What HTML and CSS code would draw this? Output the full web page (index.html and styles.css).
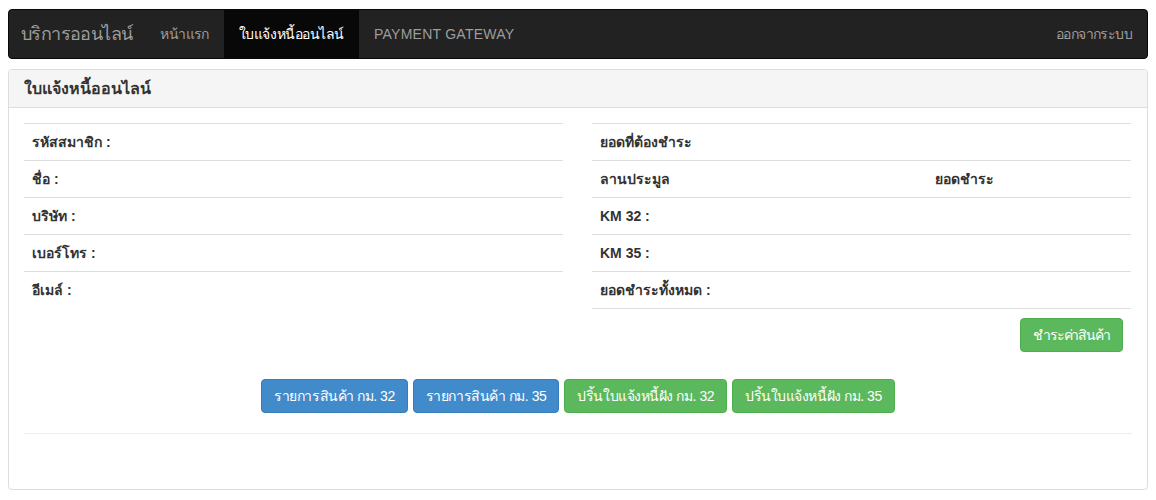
FILE: index.html
```html
<!DOCTYPE html>
<html lang="th">
<head>
<meta charset="utf-8">
<title>ใบแจ้งหนี้ออนไลน์</title>
<link rel="stylesheet" href="styles.css">
</head>
<body>
<nav class="navbar">
  <a class="brand" href="#">บริการออนไลน์</a>
  <ul class="nav">
    <li><a href="#">หน้าแรก</a></li>
    <li class="active"><a href="#">ใบแจ้งหนี้ออนไลน์</a></li>
    <li><a class="latin" href="#">PAYMENT GATEWAY</a></li>
  </ul>
  <ul class="nav nav-right">
    <li><a href="#">ออกจากระบบ</a></li>
  </ul>
</nav>

<div class="panel">
  <div class="panel-heading"><h3 class="panel-title">ใบแจ้งหนี้ออนไลน์</h3></div>
  <div class="panel-body">
    <div class="cols">
      <table class="table">
        <tr><th>รหัสสมาชิก :</th></tr>
        <tr><th>ชื่อ :</th></tr>
        <tr><th>บริษัท :</th></tr>
        <tr><th>เบอร์โทร :</th></tr>
        <tr><th>อีเมล์ :</th></tr>
      </table>
      <table class="table table-right">
        <colgroup><col class="c1"><col class="c2"></colgroup>
        <tr><th colspan="2">ยอดที่ต้องชำระ</th></tr>
        <tr><th>ลานประมูล</th><th>ยอดชำระ</th></tr>
        <tr><th colspan="2">KM 32 :</th></tr>
        <tr><th colspan="2">KM 35 :</th></tr>
        <tr><th colspan="2">ยอดชำระทั้งหมด :</th></tr>
        <tr><td colspan="2" class="right"><button class="btn btn-success btn-pay">ชำระค่าสินค้า</button></td></tr>
      </table>
    </div>
    <div class="actions">
      <button class="btn btn-primary">รายการสินค้า กม. 32</button>
      <button class="btn btn-primary">รายการสินค้า กม. 35</button>
      <button class="btn btn-success">ปริ้นใบแจ้งหนี้ฝัง กม. 32</button>
      <button class="btn btn-success">ปริ้นใบแจ้งหนี้ฝัง กม. 35</button>
    </div>
    <hr class="divider">
  </div>
</div>
</body>
</html>
```

FILE: styles.css
```css
* { box-sizing: border-box; }
body {
  margin: 9px 8px 8px 8px;
  font-family: "Liberation Sans", Arial, sans-serif;
  font-size: 14px;
  line-height: 20px;
  color: #333;
  background: #fff;
}
a { text-decoration: none; }

.navbar {
  display: flex;
  align-items: stretch;
  height: 50px;
  background: #222;
  border: 1px solid #080808;
  border-radius: 4px;
  margin-bottom: 10px;
}
.brand {
  display: block;
  padding: 14px 13px 15px 12px;
  font-size: 18px;
  line-height: 20px;
  letter-spacing: -0.6px;
  color: #9d9d9d;
}
.nav {
  list-style: none;
  margin: 0;
  padding: 0;
  display: flex;
}
.nav li a {
  display: block;
  padding: 14px 15px 15px 15px;
  line-height: 20px;
  letter-spacing: -0.6px;
  color: #9d9d9d;
}
.nav li a.latin { letter-spacing: 0.25px; }
.nav li.active a {
  background: #080808;
  color: #fff;
  letter-spacing: -0.45px;
}
.nav-right { margin-left: auto; }

.panel {
  border: 1px solid #ddd;
  border-radius: 4px;
  box-shadow: 0 1px 1px rgba(0,0,0,.05);
  height: 421px;
}
.panel-heading {
  background: #f5f5f5;
  border-bottom: 1px solid #ddd;
  border-radius: 3px 3px 0 0;
  padding: 10px 15px 9px;
}
.panel-title {
  margin: 0;
  font-size: 16px;
  line-height: 18px;
  font-weight: bold;
  color: #333;
}
.panel-body { padding: 15px; }

.cols {
  display: grid;
  grid-template-columns: 539px 539px;
  column-gap: 29px;
  align-items: start;
  margin-bottom: -1px;
}
.table {
  width: 100%;
  border-collapse: collapse;
  margin-bottom: 20px;
}
.table th, .table td {
  border-top: 1px solid #ddd;
  padding: 8px;
  text-align: left;
  font-weight: bold;
  line-height: 20px;
  vertical-align: top;
}
.table-right { table-layout: fixed; }
.table-right .c1 { width: 335px; }
.table-right td.right { text-align: right; padding-top: 9px; }

.btn {
  display: inline-block;
  font-family: inherit;
  font-size: 14px;
  line-height: 20px;
  padding: 6px 12px;
  border: 1px solid transparent;
  border-radius: 4px;
  color: #fff;
  cursor: pointer;
  font-weight: normal;
  letter-spacing: -0.45px;
}
.btn-pay { letter-spacing: -1.1px; }
.btn-primary { background: #428bca; border-color: #357ebd; }
.btn-success { background: #5cb85c; border-color: #4cae4c; }

.actions {
  display: flex;
  justify-content: center;
  gap: 5px;
}
.divider {
  border: 0;
  border-top: 1px solid #eee;
  margin: 20px 0;
}
```
